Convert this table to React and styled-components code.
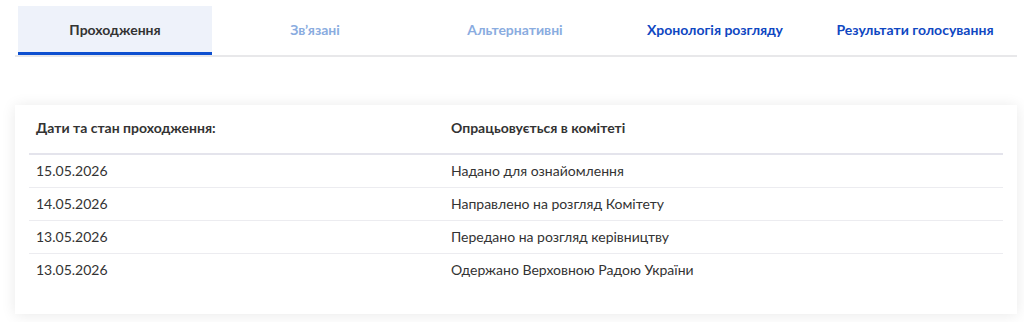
import React from "react";
import styled, { createGlobalStyle } from "styled-components";

const GlobalStyle = createGlobalStyle`
  body {
    margin: 0;
    background: #ffffff;
    font-family: Lato, "Noto Sans", sans-serif;
    color: #333333;
  }
`;

const Page = styled.div`
  width: 1024px;
  height: 322px;
  padding: 6px 7px 0 15px;
  box-sizing: border-box;
`;

const TabBar = styled.nav`
  display: grid;
  grid-template-columns: repeat(5, 200px);
  border-bottom: 2px solid #e8e8ea;
  width: 1002px;
`;

const Tab = styled.div`
  margin: 0 3px;
  height: 46px;
  display: flex;
  align-items: center;
  justify-content: center;
  font-size: 14px;
  font-weight: 700;
  color: ${(p) =>
    p.$state === "active" ? "#333333" : p.$state === "disabled" ? "#8aace0" : "#0f47c2"};
  background: ${(p) => (p.$state === "active" ? "#eef2fa" : "transparent")};
  border-bottom: 3px solid ${(p) => (p.$state === "active" ? "#0e50d0" : "transparent")};
`;

const Card = styled.section`
  margin-top: 48px;
  width: 1002px;
  background: #ffffff;
  box-shadow: 0 1px 14px rgba(0, 0, 0, 0.09);
  padding: 0 14px 28px;
  box-sizing: border-box;
`;

const Row = styled.div`
  display: grid;
  grid-template-columns: 415px 1fr;
  font-size: 14px;
  line-height: 18px;
  padding: ${(p) => (p.$head ? "14px 7px 16px" : "7px")};
  font-weight: ${(p) => (p.$head ? 700 : 400)};
  border-bottom: ${(p) =>
    p.$last ? "none" : p.$head ? "2px solid #e4e4ec" : "1px solid #ececf0"};
`;

const tabs = [
  { label: "Проходження", state: "active" },
  { label: "Зв’язані", state: "disabled" },
  { label: "Альтернативні", state: "disabled" },
  { label: "Хронологія розгляду", state: "link" },
  { label: "Результати голосування", state: "link" },
];

const rows = [
  ["15.05.2026", "Надано для ознайомлення"],
  ["14.05.2026", "Направлено на розгляд Комітету"],
  ["13.05.2026", "Передано на розгляд керівництву"],
  ["13.05.2026", "Одержано Верховною Радою України"],
];

export default function App() {
  return (
    <Page>
      <GlobalStyle />
      <TabBar>
        {tabs.map((t) => (
          <Tab key={t.label} $state={t.state}>
            {t.label}
          </Tab>
        ))}
      </TabBar>
      <Card>
        <Row $head>
          <span>Дати та стан проходження:</span>
          <span>Опрацьовується в комітеті</span>
        </Row>
        {rows.map((r, i) => (
          <Row key={i} $last={i === rows.length - 1}>
            <span>{r[0]}</span>
            <span>{r[1]}</span>
          </Row>
        ))}
      </Card>
    </Page>
  );
}
